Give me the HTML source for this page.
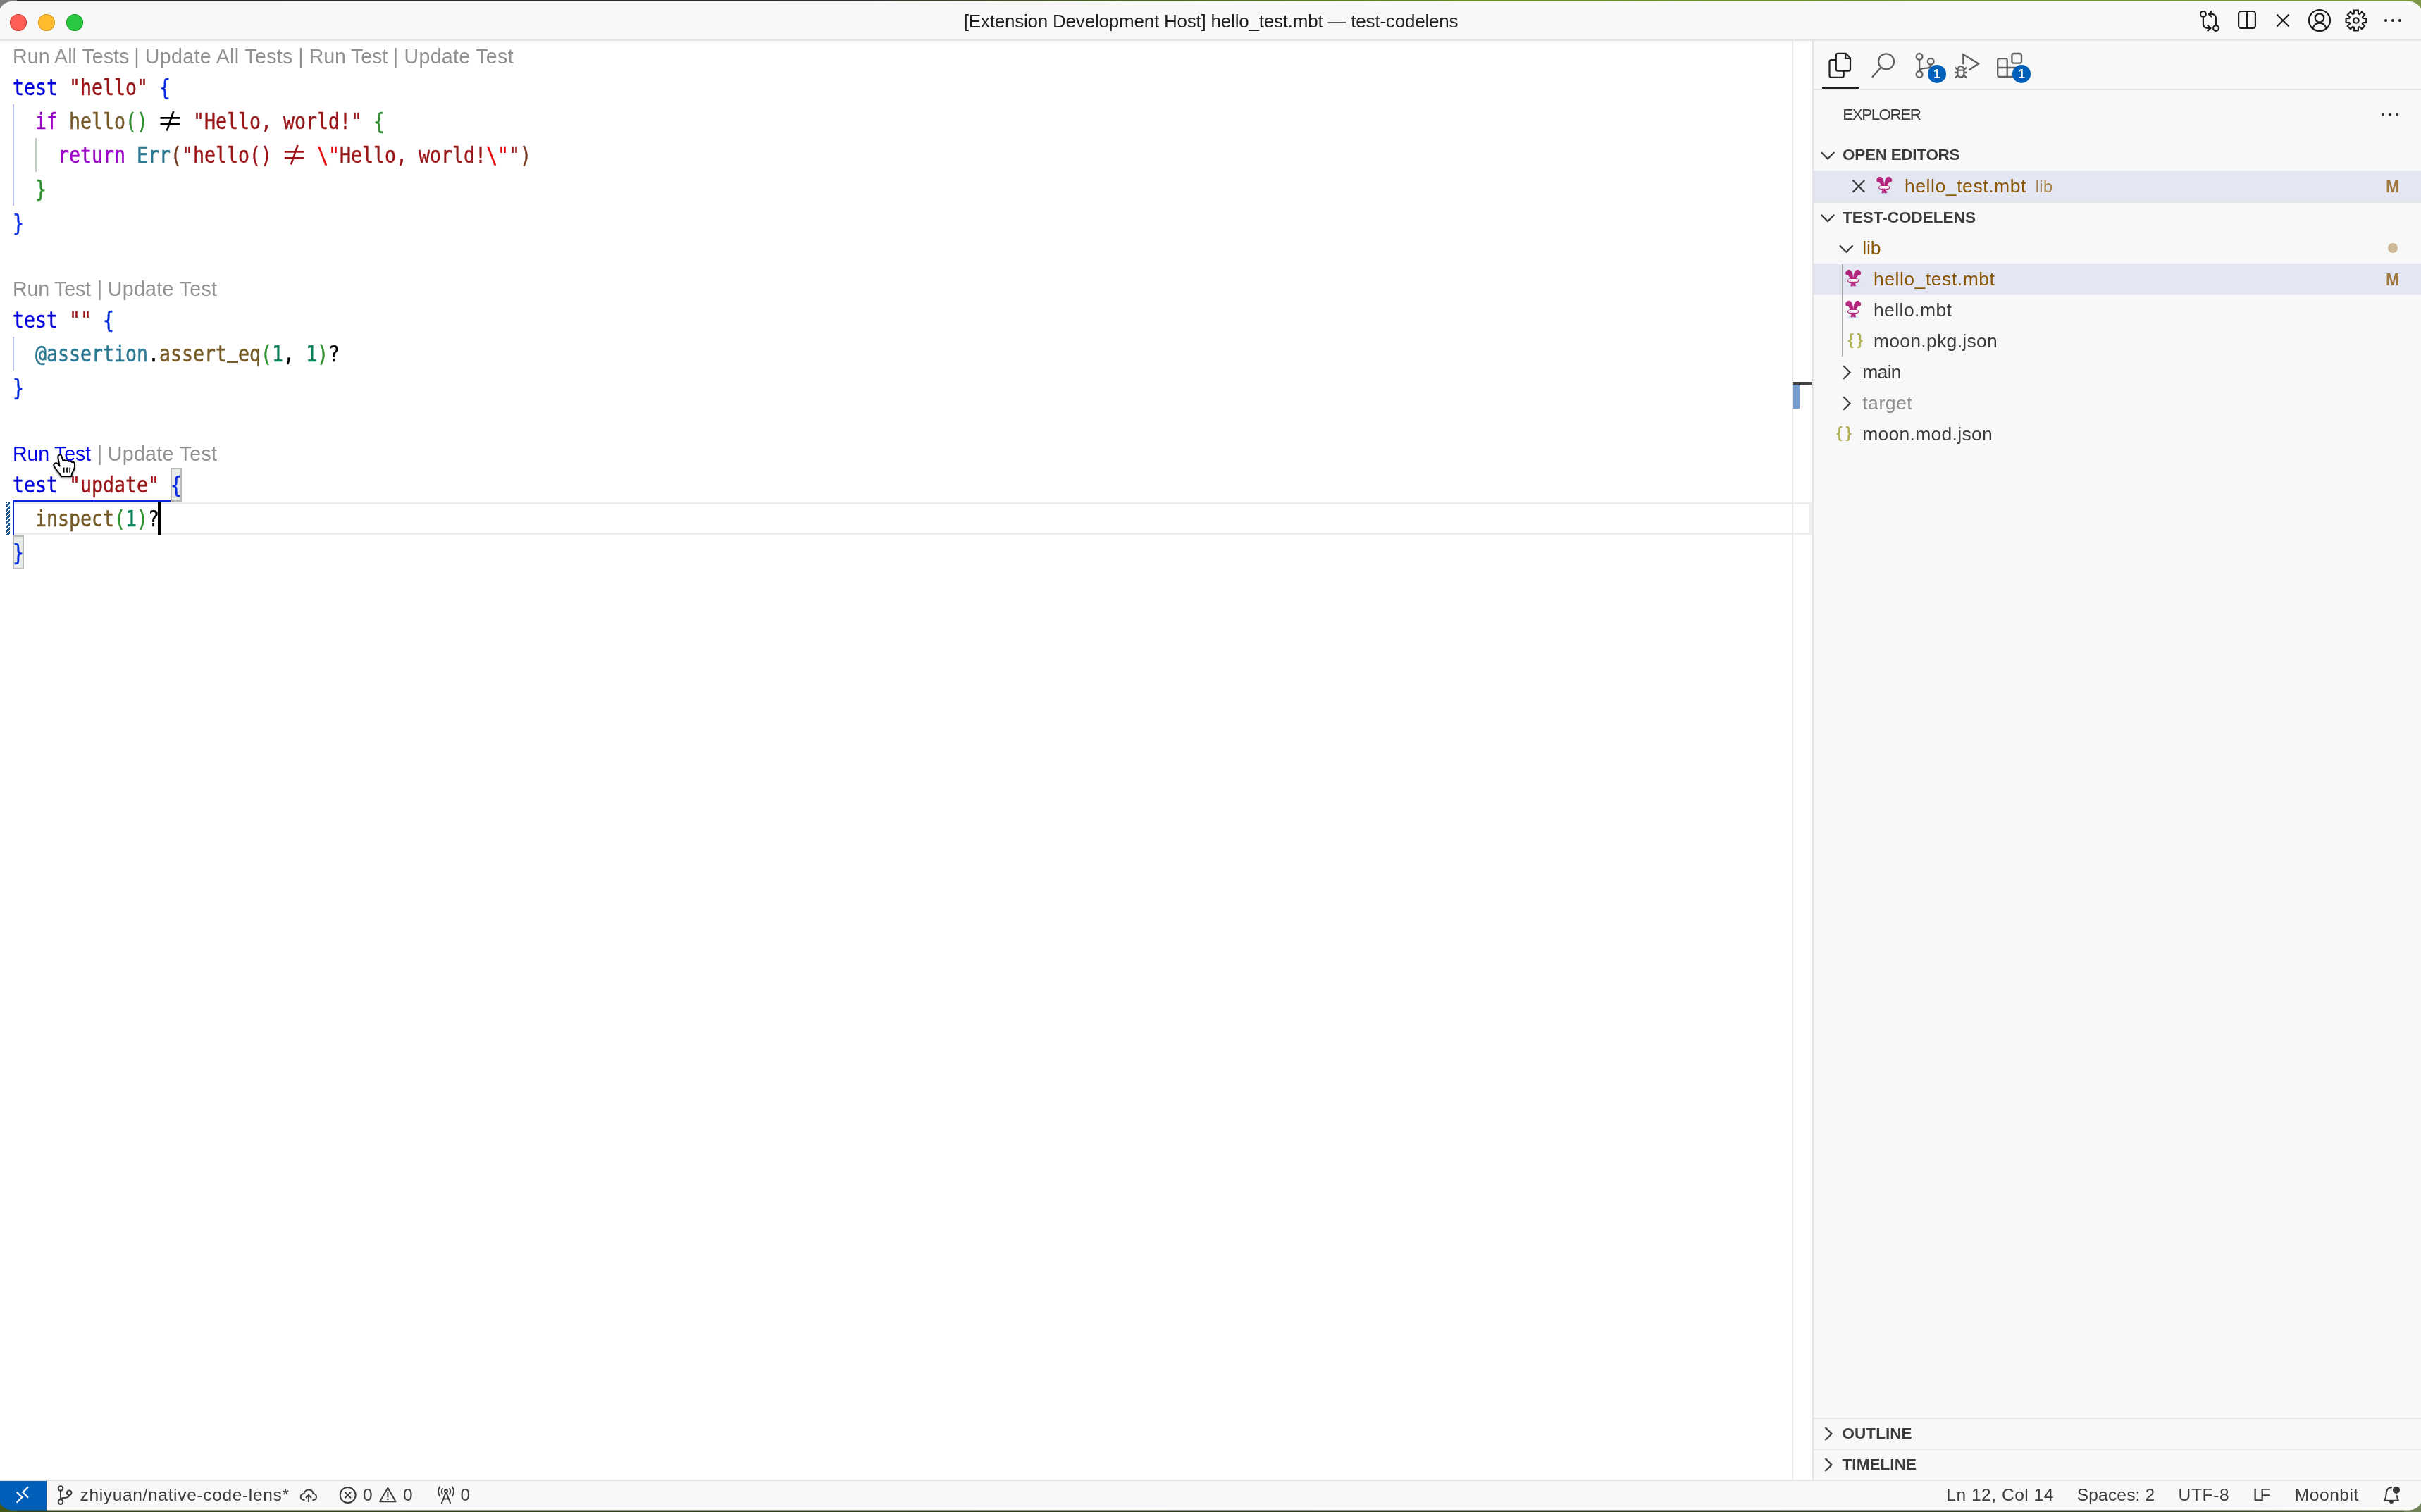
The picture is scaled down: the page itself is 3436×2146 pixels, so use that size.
<!DOCTYPE html>
<html lang="en">
<head>
<meta charset="utf-8">
<title>[Extension Development Host] hello_test.mbt — test-codelens</title>
<style>
html,body{margin:0;padding:0;}
body{width:3436px;height:2146px;font-family:'Liberation Sans',sans-serif;background:#fff;}
#root{position:relative;width:3436px;height:2146px;overflow:hidden;
 background:
  linear-gradient(to right,#2a2a2a 0,#303030 35%,#4c5d2c 45%,#68872f 60%,#7d9643 100%) 0 0/100% 6px no-repeat,
  linear-gradient(to right,#33441a 0,#2c381a 50%,#303c1e 90%,#55683c 100%) 0 2140px/100% 6px no-repeat,
  #fff;}
.cn{position:absolute;width:24px;height:24px;}
.win{position:absolute;left:0;top:0;width:3436px;height:2146px;clip-path:inset(2px -2px 2.5px -2px round 19px);background:#fff;opacity:.999;}
.abs{position:absolute;}
.t{position:absolute;white-space:pre;font-family:'Liberation Sans',sans-serif;}
.cl{position:absolute;left:18px;height:48px;line-height:48px;font-family:'DejaVu Sans Mono','Liberation Mono',monospace;font-size:32px;white-space:pre;color:#000;-webkit-text-stroke:0.5px currentColor;transform-origin:0 0;transform:scaleX(0.83049);}
.us{position:relative;top:-6px;font-weight:700;-webkit-text-stroke:0;}
.ne{display:inline-block;width:38.53px;text-align:center;line-height:0;font-family:'Noto Sans CJK SC','DejaVu Sans',sans-serif;font-size:38.6px;transform:scaleX(1.2041);position:relative;top:3.2px;-webkit-text-stroke:0;}
svg{position:absolute;left:0;top:0;overflow:visible;}
</style>
</head>
<body>
<div id="root">
<div class="cn" style="left:0;top:0;background:#7c7c7a"></div><div class="cn" style="right:0;top:0;background:#7d9646"></div><div class="cn" style="left:0;bottom:0;background:#42581a"></div><div class="cn" style="right:0;bottom:0;background:#6f8258"></div>
<div class="win">
<!-- title bar -->
<div class="abs" style="left:0;top:2px;width:3436px;height:54px;background:#f8f8f8"></div>
<div class="abs" style="left:0;top:56px;width:3436px;height:2px;background:#e5e5e5"></div>
<div class="abs" style="left:14px;top:20px;width:24px;height:24px;border-radius:50%;background:#fe5f57;box-shadow:inset 0 0 0 1px rgba(160,40,30,.55)"></div>
<div class="abs" style="left:54px;top:20px;width:24px;height:24px;border-radius:50%;background:#febc2e;box-shadow:inset 0 0 0 1px rgba(170,120,20,.55)"></div>
<div class="abs" style="left:94px;top:20px;width:24px;height:24px;border-radius:50%;background:#28c840;box-shadow:inset 0 0 0 1px rgba(20,130,30,.55)"></div>

<!-- editor -->
<div class="abs" style="left:0;top:58px;width:2572px;height:2042px;background:#fff"></div>
<!-- indent guides -->
<div class="abs" style="left:18px;top:148px;width:2px;height:144px;background:#b6beee"></div>
<div class="abs" style="left:50px;top:196px;width:2px;height:48px;background:#bdcfbc"></div>
<div class="abs" style="left:18px;top:478px;width:2px;height:48px;background:#b6beee"></div>
<!-- current line -->
<div class="abs" style="left:20px;top:712px;width:2552px;height:48px;box-sizing:border-box;border:4px solid #eeeeee;border-left:0"></div>
<!-- active bracket guide -->
<div class="abs" style="left:18px;top:710px;width:224px;height:2px;background:#0a25da"></div>
<div class="abs" style="left:18px;top:710px;width:2px;height:50px;background:#0a25da"></div>
<!-- dirty diff hatch -->
<div class="abs" style="left:8px;top:712px;width:6px;height:48px;background:repeating-linear-gradient(135deg,#1c5a90 0,#1c5a90 2.2px,#ffffff 2.2px,#ffffff 4.24px)"></div>
<!-- bracket match boxes -->
<div class="abs" style="left:242px;top:664px;width:16px;height:48px;box-sizing:border-box;border:2px solid #b9b9b9;background:#e8ece7"></div>
<div class="abs" style="left:18px;top:760px;width:16px;height:48px;box-sizing:border-box;border:2px solid #b9b9b9;background:#e8ece7"></div>
<div class="cl" style="top:100px"><span style="color:#0000dc">test</span> <span style="color:#9a1518">&quot;hello&quot;</span> <span style="color:#0a2fe0">{</span></div>
<div class="cl" style="top:148px">  <span style="color:#9c00c8">if</span> <span style="color:#755b28">hello</span><span style="color:#319131">()</span> <span class="ne" style="color:#000000">≠</span> <span style="color:#9a1518">&quot;Hello, world!&quot;</span> <span style="color:#319131">{</span></div>
<div class="cl" style="top:196px">    <span style="color:#9c00c8">return</span> <span style="color:#2a7892">Err</span><span style="color:#763a20">(</span><span style="color:#9a1518">&quot;hello() </span><span class="ne" style="color:#9a1518">≠</span><span style="color:#9a1518"> </span><span style="color:#e40b0b">\&quot;</span><span style="color:#9a1518">Hello, world!</span><span style="color:#e40b0b">\&quot;</span><span style="color:#9a1518">&quot;</span><span style="color:#763a20">)</span></div>
<div class="cl" style="top:244px">  <span style="color:#319131">}</span></div>
<div class="cl" style="top:292px"><span style="color:#0a2fe0">}</span></div>
<div class="cl" style="top:430px"><span style="color:#0000dc">test</span> <span style="color:#9a1518">&quot;&quot;</span> <span style="color:#0a2fe0">{</span></div>
<div class="cl" style="top:478px">  <span style="color:#2a7892">@assertion</span><span style="color:#000000">.</span><span style="color:#755b28">assert<span class="us">_</span>eq</span><span style="color:#319131">(</span><span style="color:#0c8258">1</span><span style="color:#000000">,</span> <span style="color:#0c8258">1</span><span style="color:#319131">)</span><span style="color:#000000">?</span></div>
<div class="cl" style="top:526px"><span style="color:#0a2fe0">}</span></div>
<div class="cl" style="top:664px"><span style="color:#0000dc">test</span> <span style="color:#9a1518">&quot;update&quot;</span> <span style="color:#0a2fe0">{</span></div>
<div class="cl" style="top:712px">  <span style="color:#755b28">inspect</span><span style="color:#319131">(</span><span style="color:#0c8258">1</span><span style="color:#319131">)</span><span style="color:#000000">?</span></div>
<div class="cl" style="top:760px"><span style="color:#0a2fe0">}</span></div>
<!-- cursor -->
<div class="abs" style="left:224px;top:712px;width:4px;height:48px;background:#000"></div>
<!-- overview ruler -->
<div class="abs" style="left:2544px;top:58px;width:1px;height:2042px;background:#e8e8e8"></div>
<div class="abs" style="left:2545px;top:546px;width:9px;height:34px;background:#779fd2"></div>
<div class="abs" style="left:2545px;top:542px;width:27px;height:4px;background:#424242"></div>

<!-- sidebar -->
<div class="abs" style="left:2572px;top:58px;width:864px;height:2042px;background:#f8f8f8"></div>
<div class="abs" style="left:2572px;top:58px;width:2px;height:2042px;background:#e5e5e5"></div>
<div class="abs" style="left:2574px;top:126px;width:862px;height:2px;background:#e5e5e5"></div>
<div class="abs" style="left:2586px;top:124px;width:52px;height:2px;background:#1f1f1f"></div>
<div class="abs" style="left:2574px;top:242px;width:862px;height:44px;background:#e4e6f1"></div>
<div class="abs" style="left:2574px;top:286px;width:862px;height:2px;background:#e5e5e5"></div>
<div class="abs" style="left:2574px;top:374px;width:862px;height:44px;background:#e4e6f1"></div>
<div class="abs" style="left:2614px;top:374px;width:2px;height:132px;background:#a5a5a5"></div>
<div class="abs" style="left:2574px;top:2012px;width:862px;height:2px;background:#e5e5e5"></div>
<div class="abs" style="left:2574px;top:2056px;width:862px;height:2px;background:#e5e5e5"></div>
<div class="abs" style="left:3388.7px;top:344.5px;width:14.6px;height:14.6px;border-radius:50%;background:#895503;opacity:.4"></div>

<!-- status bar -->
<div class="abs" style="left:0;top:2100px;width:3436px;height:46px;background:#f8f8f8"></div>
<div class="abs" style="left:0;top:2100px;width:3436px;height:2px;background:#e5e5e5"></div>
<div class="abs" style="left:0;top:2102px;width:66px;height:44px;background:#005fb8"></div>

<span class="t" style="left:1367.7px;top:17.0px;font-size:26px;line-height:26px;font-weight:400;color:#1e1e1e;letter-spacing:-0.209px;">[Extension Development Host] hello_test.mbt — test-codelens</span>
<span class="t" style="left:18.0px;top:66.2px;font-size:28.6px;line-height:28.6px;font-weight:400;color:#919191;letter-spacing:0.053px;">Run All Tests</span>
<span class="t" style="left:190.3px;top:66.2px;font-size:28.6px;line-height:28.6px;font-weight:400;color:#919191;letter-spacing:0.000px;">|</span>
<span class="t" style="left:205.7px;top:66.2px;font-size:28.6px;line-height:28.6px;font-weight:400;color:#919191;letter-spacing:0.346px;">Update All Tests</span>
<span class="t" style="left:423.3px;top:66.2px;font-size:28.6px;line-height:28.6px;font-weight:400;color:#919191;letter-spacing:0.000px;">|</span>
<span class="t" style="left:438.7px;top:66.2px;font-size:28.6px;line-height:28.6px;font-weight:400;color:#919191;letter-spacing:-0.118px;">Run Test</span>
<span class="t" style="left:557.8px;top:66.2px;font-size:28.6px;line-height:28.6px;font-weight:400;color:#919191;letter-spacing:0.000px;">|</span>
<span class="t" style="left:573.5px;top:66.2px;font-size:28.6px;line-height:28.6px;font-weight:400;color:#919191;letter-spacing:0.302px;">Update Test</span>
<span class="t" style="left:18.0px;top:396.2px;font-size:28.6px;line-height:28.6px;font-weight:400;color:#919191;letter-spacing:-0.190px;">Run Test</span>
<span class="t" style="left:137.8px;top:396.2px;font-size:28.6px;line-height:28.6px;font-weight:400;color:#919191;letter-spacing:0.000px;">|</span>
<span class="t" style="left:152.7px;top:396.2px;font-size:28.6px;line-height:28.6px;font-weight:400;color:#919191;letter-spacing:0.322px;">Update Test</span>
<span class="t" style="left:18.0px;top:630.2px;font-size:28.6px;line-height:28.6px;font-weight:400;color:#0000e6;letter-spacing:-0.190px;">Run Test</span>
<span class="t" style="left:137.8px;top:630.2px;font-size:28.6px;line-height:28.6px;font-weight:400;color:#919191;letter-spacing:0.000px;">|</span>
<span class="t" style="left:152.7px;top:630.2px;font-size:28.6px;line-height:28.6px;font-weight:400;color:#919191;letter-spacing:0.322px;">Update Test</span>
<span class="t" style="left:2615.3px;top:152.0px;font-size:22.5px;line-height:22.5px;font-weight:400;color:#3b3b3b;letter-spacing:-1.564px;">EXPLORER</span>
<span class="t" style="left:2615.0px;top:208.9px;font-size:22.5px;line-height:22.5px;font-weight:700;color:#3b3b3b;letter-spacing:-0.275px;">OPEN EDITORS</span>
<span class="t" style="left:2703.0px;top:251.2px;font-size:26.5px;line-height:26.5px;font-weight:400;color:#895503;letter-spacing:0.570px;">hello_test.mbt</span>
<span class="t" style="left:2888.8px;top:253.8px;font-size:23.4px;line-height:23.4px;font-weight:400;color:#895503;letter-spacing:0.347px;opacity:.7;">lib</span>
<span class="t" style="left:2615.0px;top:297.8px;font-size:22.5px;line-height:22.5px;font-weight:700;color:#3b3b3b;letter-spacing:0.010px;">TEST-CODELENS</span>
<span class="t" style="left:2643.2px;top:339.4px;font-size:26.5px;line-height:26.5px;font-weight:400;color:#895503;letter-spacing:-0.058px;">lib</span>
<span class="t" style="left:2658.9px;top:383.4px;font-size:26.5px;line-height:26.5px;font-weight:400;color:#895503;letter-spacing:0.547px;">hello_test.mbt</span>
<span class="t" style="left:2658.9px;top:427.4px;font-size:26.5px;line-height:26.5px;font-weight:400;color:#3b3b3b;letter-spacing:0.446px;">hello.mbt</span>
<span class="t" style="left:2658.9px;top:471.4px;font-size:26.5px;line-height:26.5px;font-weight:400;color:#3b3b3b;letter-spacing:0.295px;">moon.pkg.json</span>
<span class="t" style="left:2643.2px;top:515.4px;font-size:26.5px;line-height:26.5px;font-weight:400;color:#3b3b3b;letter-spacing:-0.684px;">main</span>
<span class="t" style="left:2643.2px;top:559.4px;font-size:26.5px;line-height:26.5px;font-weight:400;color:#8e8e90;letter-spacing:0.557px;">target</span>
<span class="t" style="left:2643.2px;top:603.4px;font-size:26.5px;line-height:26.5px;font-weight:400;color:#3b3b3b;letter-spacing:0.276px;">moon.mod.json</span>
<span class="t" style="left:3385.9px;top:253.5px;font-size:23.4px;line-height:23.4px;font-weight:700;color:#895503;letter-spacing:0.000px;opacity:.75;">M</span>
<span class="t" style="left:3385.9px;top:385.5px;font-size:23.4px;line-height:23.4px;font-weight:700;color:#895503;letter-spacing:0.000px;opacity:.75;">M</span>
<span class="t" style="left:2614.5px;top:2023.7px;font-size:22.5px;line-height:22.5px;font-weight:700;color:#3b3b3b;letter-spacing:0.058px;">OUTLINE</span>
<span class="t" style="left:2614.5px;top:2068.3px;font-size:22.5px;line-height:22.5px;font-weight:700;color:#3b3b3b;letter-spacing:0.071px;">TIMELINE</span>
<span class="t" style="left:113.5px;top:2110.4px;font-size:24.5px;line-height:24.5px;font-weight:400;color:#3b3b3b;letter-spacing:0.664px;">zhiyuan/native-code-lens*</span>
<span class="t" style="left:515.1px;top:2110.4px;font-size:24.5px;line-height:24.5px;font-weight:400;color:#3b3b3b;letter-spacing:0.000px;">0</span>
<span class="t" style="left:572.1px;top:2110.4px;font-size:24.5px;line-height:24.5px;font-weight:400;color:#3b3b3b;letter-spacing:0.000px;">0</span>
<span class="t" style="left:653.5px;top:2110.4px;font-size:24.5px;line-height:24.5px;font-weight:400;color:#3b3b3b;letter-spacing:0.000px;">0</span>
<span class="t" style="left:2762.3px;top:2110.4px;font-size:24.5px;line-height:24.5px;font-weight:400;color:#3b3b3b;letter-spacing:0.529px;">Ln 12, Col 14</span>
<span class="t" style="left:2947.8px;top:2110.4px;font-size:24.5px;line-height:24.5px;font-weight:400;color:#3b3b3b;letter-spacing:0.179px;">Spaces: 2</span>
<span class="t" style="left:3091.6px;top:2110.4px;font-size:24.5px;line-height:24.5px;font-weight:400;color:#3b3b3b;letter-spacing:0.670px;">UTF-8</span>
<span class="t" style="left:3197.4px;top:2110.4px;font-size:24.5px;line-height:24.5px;font-weight:400;color:#3b3b3b;letter-spacing:-3.594px;">LF</span>
<span class="t" style="left:3256.8px;top:2110.4px;font-size:24.5px;line-height:24.5px;font-weight:400;color:#3b3b3b;letter-spacing:0.571px;">Moonbit</span>
<svg width="3436" height="2146" viewBox="0 0 3436 2146" fill="none" stroke-linecap="butt" stroke-linejoin="round">
<!-- title bar icons -->
<g stroke="#1e1e1e" stroke-width="2.2">
 <circle cx="3126.9" cy="19.9" r="3.9"/><circle cx="3145" cy="40" r="3.9"/>
 <path d="M3126.9,23.8 V33.5 Q3126.9,40 3133.4,40 H3137"/><path d="M3132.8,35.7 L3137.4,40 L3132.8,44.3" stroke-linejoin="miter"/>
 <path d="M3145,36.1 V26.4 Q3145,19.9 3138.5,19.9 H3135.4"/><path d="M3139.4,15.6 L3134.9,19.9 L3139.4,24.2" stroke-linejoin="miter"/>
 <rect x="3177.1" y="16" width="23.8" height="23.9" rx="3.2"/><path d="M3189,16 V40"/>
 <path d="M3231.5,20.5 L3248.5,37.5 M3248.5,20.5 L3231.5,37.5"/>
 <circle cx="3292" cy="29" r="15"/><circle cx="3292" cy="25.5" r="6.2"/>
 <path d="M3282.4,40.4 C3284,35.5 3287.5,32.7 3292,32.7 C3296.5,32.7 3300,35.5 3301.6,40.4"/>
 <path d="M3340.83,19.27 L3340.99,14.69 L3346.81,14.69 L3346.97,19.27 L3348.61,19.95 L3351.96,16.83 L3356.07,20.94 L3352.95,24.29 L3353.63,25.93 L3358.21,26.09 L3358.21,31.91 L3353.63,32.07 L3352.95,33.71 L3356.07,37.06 L3351.96,41.17 L3348.61,38.05 L3346.97,38.73 L3346.81,43.31 L3340.99,43.31 L3340.83,38.73 L3339.19,38.05 L3335.84,41.17 L3331.73,37.06 L3334.85,33.71 L3334.17,32.07 L3329.59,31.91 L3329.59,26.09 L3334.17,25.93 L3334.85,24.29 L3331.73,20.94 L3335.84,16.83 L3339.19,19.95 Z" stroke-linejoin="miter"/><circle cx="3343.9" cy="29" r="3.7"/>
</g>
<g fill="#1e1e1e"><circle cx="3386" cy="29" r="2.1"/><circle cx="3396" cy="29" r="2.1"/><circle cx="3406" cy="29" r="2.1"/></g>

<!-- activity bar -->
<g stroke="#1f1f1f" stroke-width="2.2">
 <path d="M2605.8,78.4 Q2605.8,75.9 2608.3,75.9 H2619.6 L2626,82.3 V98.2 Q2626,100.7 2623.5,100.7 H2608.3 Q2605.8,100.7 2605.8,98.2 Z"/>
 <path d="M2619.2,76.2 V82.8 H2625.8" stroke-linejoin="miter"/>
 <path d="M2605.6,85 H2599 Q2596.5,85 2596.5,87.5 V107.3 Q2596.5,109.8 2599,109.8 H2614.2 Q2616.7,109.8 2616.7,107.3 V101"/>
</g>
<g stroke="#616161" stroke-width="2.3">
 <circle cx="2677" cy="87.3" r="11"/><path d="M2669.6,95.4 L2656.9,109.7"/>
 <circle cx="2724.1" cy="80.4" r="4.4"/><circle cx="2740.2" cy="87.3" r="4.4"/><circle cx="2724.1" cy="105.4" r="4.4"/>
 <path d="M2724.1,84.8 V101"/><path d="M2740.2,91.7 C2740.2,96.5 2736,96.6 2732,96.8 C2727.5,97 2724.1,98 2724.1,101"/>
 <path d="M2786.3,91.3 V77.3 L2808,90.3 L2794.2,99.5" stroke-linejoin="miter"/>
 <path d="M2778.4,100.5 C2778.4,96.4 2779.8,94.1 2782.9,94.1 C2786,94.1 2787.4,96.4 2787.4,100.5 V104 C2787.4,107.6 2785.8,109.5 2782.9,109.5 C2780,109.5 2778.4,107.6 2778.4,104 Z"/>
 <path d="M2778.4,99.6 H2787.4 M2774.2,103 H2778.4 M2787.4,103 H2791.7 M2774.8,95.6 L2778.4,98.8 M2791.1,95.6 L2787.5,98.8 M2774.8,110.4 L2778.6,107.2 M2791.1,110.4 L2787.3,107.2"/>
 <rect x="2855.4" y="76" width="13.6" height="13.7" rx="2.8"/>
 <path d="M2835.2,85.5 Q2835.2,83.1 2837.6,83.1 H2846.3 Q2848.7,83.1 2848.7,85.5 V96 H2859.4 Q2861.8,96 2861.8,98.4 V106.6 Q2861.8,109 2859.4,109 H2837.6 Q2835.2,109 2835.2,106.6 Z"/>
 <path d="M2835.2,96 H2848.7 V109"/>
</g>
<circle cx="2749" cy="104.9" r="13" fill="#005fb8"/><circle cx="2869" cy="104.9" r="13" fill="#005fb8"/>
<text x="2749" y="111.4" font-family="'Liberation Sans',sans-serif" font-weight="700" font-size="18" fill="#fff" text-anchor="middle">1</text>
<text x="2869" y="111.4" font-family="'Liberation Sans',sans-serif" font-weight="700" font-size="18" fill="#fff" text-anchor="middle">1</text>

<!-- sidebar chevrons etc -->
<g stroke="#3b3b3b" stroke-width="2.2" stroke-linejoin="miter">
 <path d="M2584.6,216 L2594,225.4 L2603.4,216"/>
 <path d="M2584.6,304.7 L2594,314.1 L2603.4,304.7"/>
 <path d="M2611,348.4 L2620.3,357.7 L2629.6,348.4"/>
 <path d="M2616.3,519.3 L2625.5,528.5 L2616.3,537.7"/>
 <path d="M2616.3,563.3 L2625.5,572.5 L2616.3,581.7"/>
 <path d="M2590.4,2025.9 L2599.6,2035.1 L2590.4,2044.3"/>
 <path d="M2590.4,2069.9 L2599.6,2079.1 L2590.4,2088.3"/>
 <path d="M2629.6,256 L2646.2,272.6 M2646.2,256 L2629.6,272.6"/>
</g>
<g fill="#3b3b3b"><circle cx="3381.8" cy="162.7" r="2.1"/><circle cx="3392" cy="162.7" r="2.1"/><circle cx="3402.2" cy="162.7" r="2.1"/></g>

<!-- json icons -->
<g font-family="'Liberation Sans',sans-serif" font-weight="700" font-size="21.5" fill="#b2b255">
<text x="2622.6" y="489.3">{</text><text x="2635.6" y="489.3">}</text>
<text x="2606.6" y="621.3">{</text><text x="2619.6" y="621.3">}</text>
</g>

<!-- status bar icons -->
<g stroke="#fff" stroke-width="2.2" stroke-linejoin="miter">
 <path d="M23.6,2117.6 L31.4,2125 L23.6,2132.6"/><path d="M40,2110.4 L32.4,2118 L40,2125.6"/>
</g>
<g stroke="#3b3b3b" stroke-width="2">
 <circle cx="86" cy="2112.5" r="3.3"/><circle cx="86" cy="2131.6" r="3.3"/><circle cx="98.2" cy="2118.7" r="3.3"/>
 <path d="M86,2115.8 V2128.3"/><path d="M98.2,2122 C98.2,2125.6 94,2125.8 91,2126 C88,2126.2 86,2127 86,2128.3"/>
 <!-- cloud upload -->
 <path d="M432.5,2129 H431.8 C428.5,2129 426.7,2126.8 426.7,2124.4 C426.7,2121.8 428.8,2120 431.5,2120.1 C432,2116.6 434.8,2114.5 438,2114.5 C441.3,2114.5 444,2116.7 444.5,2120.1 C447,2120.1 449,2122 449,2124.5 C449,2127 447,2129 444.5,2129 H443.5"/>
 <path d="M438,2132 V2122.4 M434,2126 L438,2122 L442,2126" stroke-linejoin="miter"/>
 <!-- error -->
 <circle cx="493.7" cy="2122" r="11"/><path d="M489.4,2117.7 L498,2126.3 M498,2117.7 L489.4,2126.3"/>
 <!-- warning -->
 <path d="M550.4,2111.8 L561.6,2131.2 H539.2 Z"/><path d="M550.4,2118 V2125.2 M550.4,2126.8 V2129"/>
 <!-- radio tower -->
 <circle cx="633" cy="2116.6" r="2"/>
 <path d="M632.6,2118.6 L626.6,2134 M633.4,2118.6 L639.4,2134 M629.6,2127.6 H636.4"/>
 <path d="M628.3,2112.2 C626.6,2114.8 626.6,2118.6 628.3,2121.2 M637.7,2112.2 C639.4,2114.8 639.4,2118.6 637.7,2121.2"/>
 <path d="M624.6,2109.6 C621.4,2114 621.4,2119.8 624.6,2124.2 M641.4,2109.6 C644.6,2114 644.6,2119.8 641.4,2124.2"/>
 <!-- bell -->
 <path d="M3395,2111.3 C3388.5,2111 3386.6,2116 3386.5,2121 C3386.4,2125 3385.5,2127.6 3384.4,2129.8 H3403.8 C3402.6,2127.5 3402,2125 3401.8,2122.2" stroke-linejoin="miter"/>
</g>
<g fill="#3b3b3b"><circle cx="3401" cy="2114.9" r="5"/><path d="M3390.8,2130.5 H3397.3 C3397.3,2132.6 3396,2133.9 3394,2133.9 C3392,2133.9 3390.8,2132.6 3390.8,2130.5 Z"/></g>

<!-- moonbit rabbit -->
<defs>
<g id="rab">
 <ellipse cx="18.2" cy="28.5" rx="10" ry="1.9" fill="#cfe2f6" opacity=".75"/>
 <path d="M14.6,17.2 L10.6,12.2 C9.6,13 8.2,12.8 7.6,11.6 C6.6,9.6 7.4,6.6 9.8,5.4 C12,4.4 14.4,5 15.6,6.8 C17,9 17.8,12.6 18.05,15.4 L18.2,17.2 Z" fill="#b3267e"/>
 <path d="M21.8,17.2 L25.8,12.2 C26.8,13 28.2,12.8 28.8,11.6 C29.8,9.6 29,6.6 26.6,5.4 C24.4,4.4 22,5 20.8,6.8 C19.4,9 18.6,12.6 18.35,15.4 L18.2,17.2 Z" fill="#b3267e"/>
 <ellipse cx="18.2" cy="20.2" rx="8.2" ry="3.8" fill="#b3267e"/>
 <rect x="11.1" y="17.9" width="14.2" height="3.8" rx="1.9" fill="#fff"/>
 <ellipse cx="14" cy="19.9" rx="1.3" ry="0.9" fill="#b793b4"/><circle cx="20.5" cy="19.5" r=".55" fill="#555"/><circle cx="22.3" cy="19.5" r=".55" fill="#555"/>
 <path d="M14.4,23 H22 L20.8,25 C22.4,25.4 22.6,27.8 21,28.4 C19.8,28.8 18.8,28.2 18.2,27.2 C17.6,28.2 16.6,28.8 15.4,28.4 C13.8,27.8 14,25.4 15.6,25 Z" fill="#b3267e"/>
</g>
</defs>
<use href="#rab" x="2656" y="246"/>
<use href="#rab" x="2612" y="378"/>
<use href="#rab" x="2612" y="422"/>

<!-- hand cursor -->
<defs><filter id="hs" x="-30%" y="-30%" width="170%" height="170%"><feGaussianBlur in="SourceAlpha" stdDeviation="1.1"/><feOffset dx="0" dy="1.6"/><feComponentTransfer><feFuncA type="linear" slope=".38"/></feComponentTransfer><feMerge><feMergeNode/><feMergeNode in="SourceGraphic"/></feMerge></filter></defs>
<g transform="translate(76,645)" filter="url(#hs)">
 <path d="M7.9,0.8 C9,0.2 10.5,0.3 11,1.4 L13.4,8.9 C14.2,7.9 16.2,7.8 17,9 C18,8.4 20.6,8.6 21.4,10 C22.6,9.4 25,9.6 25.8,11 C27.4,10.2 29.6,11 29.9,13 C30.4,16 30,19 29,21.6 C28.2,23.6 27,24.6 26.4,26.4 L25.2,31 H11 C10.4,29.4 8.6,27.4 6.8,25.3 C5,23 3.6,21 2.4,19.2 C1.4,17.8 0.4,16.6 0.3,15.4 C0.2,13.8 1.6,12.4 3.4,12.2 C5.4,12 7,14 8.7,16.6 L6.4,4.6 C6.1,3 6.6,1.4 7.9,0.8 Z" fill="#fff" stroke="#000" stroke-width="1.9" stroke-linejoin="round"/>
 <path d="M14.7,18.4 V25.8 M19,18.4 V25.8 M23.2,18.4 V25.8" stroke="#000" stroke-width="1.7"/>
</g>
</svg>

</div>
</div>
</body>
</html>
